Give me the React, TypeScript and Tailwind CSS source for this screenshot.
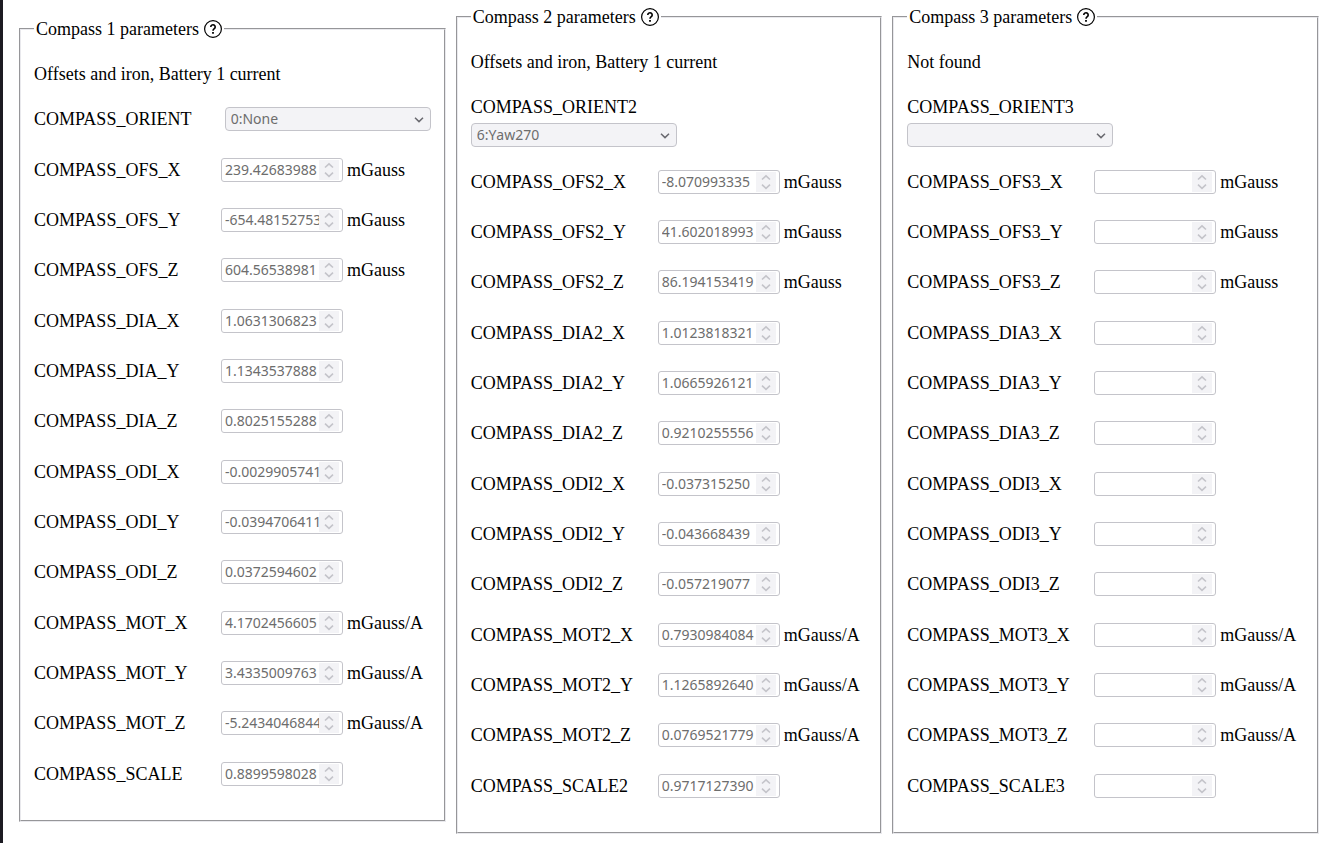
import { useId } from "react";

interface Param {
  name: string;
  value: string;
  unit?: string;
}

interface Compass {
  title: string;
  status: string;
  orient: { name: string; value: string; stacked?: boolean };
  groups: Param[][];
}

const AXES = ["X", "Y", "Z"];

const GROUPS = [
  { prefix: "OFS", unit: "mGauss" },
  { prefix: "DIA" },
  { prefix: "ODI" },
  { prefix: "MOT", unit: "mGauss/A" },
];

/** `values` holds OFS, DIA, ODI and MOT as X/Y/Z triplets, then SCALE. */
function buildGroups(suffix: string, values: string[]): Param[][] {
  const groups: Param[][] = GROUPS.map(({ prefix, unit }, g) =>
    AXES.map((axis, a) => ({
      name: `COMPASS_${prefix}${suffix}_${axis}`,
      value: values[g * 3 + a] ?? "",
      unit,
    }))
  );
  groups.push([{ name: `COMPASS_SCALE${suffix}`, value: values[12] ?? "" }]);
  return groups;
}

const COMPASSES: Compass[] = [
  {
    title: "Compass 1 parameters",
    status: "Offsets and iron, Battery 1 current",
    orient: { name: "COMPASS_ORIENT", value: "0:None" },
    groups: buildGroups("", [
      "239.42683988",
      "-654.48152753",
      "604.56538981",
      "1.0631306823",
      "1.1343537888",
      "0.8025155288",
      "-0.0029905741",
      "-0.0394706411",
      "0.0372594602",
      "4.1702456605",
      "3.4335009763",
      "-5.2434046844",
      "0.8899598028",
    ]),
  },
  {
    title: "Compass 2 parameters",
    status: "Offsets and iron, Battery 1 current",
    orient: { name: "COMPASS_ORIENT2", value: "6:Yaw270", stacked: true },
    groups: buildGroups("2", [
      "-8.070993335",
      "41.602018993",
      "86.194153419",
      "1.0123818321",
      "1.0665926121",
      "0.9210255556",
      "-0.037315250",
      "-0.043668439",
      "-0.057219077",
      "0.7930984084",
      "1.1265892640",
      "0.0769521779",
      "0.9717127390",
    ]),
  },
  {
    title: "Compass 3 parameters",
    status: "Not found",
    orient: { name: "COMPASS_ORIENT3", value: "", stacked: true },
    groups: buildGroups("3", []),
  },
];

function HelpIcon() {
  return (
    <svg width="18" height="18" viewBox="0 0 18 18" fill="none" stroke="black" aria-hidden="true">
      <circle cx="9" cy="9" r="8.4" strokeWidth="1.2" />
      <path d="M6.8 7a2.2 2.2 0 1 1 3.5 1.7c-.8.6-1.3 1-1.3 2" strokeWidth="1.6" />
      <path d="M9 12v1.8" strokeWidth="1.8" />
    </svg>
  );
}

function NumberField({ name, value, unit }: Param) {
  const id = useId();

  return (
    <div className="flex h-6 items-center">
      <label htmlFor={id} className="w-[187px] shrink-0">
        {name}
      </label>
      <div className="flex h-6 w-[122px] shrink-0 items-center rounded-[3px] border border-[#c4c4ca] bg-white px-[3px]">
        <input
          id={id}
          type="number"
          disabled
          defaultValue={value}
          className="h-5 w-0 min-w-0 flex-1 [appearance:textfield] font-['Noto_Sans',sans-serif] text-sm text-[#6d6d6d] [&::-webkit-inner-spin-button]:appearance-none"
        />
        <svg
          width="20"
          height="20"
          viewBox="0 0 20 20"
          fill="none"
          stroke="#c4c4ca"
          strokeWidth="1.6"
          className="shrink-0 bg-[#f3f3f6]"
          aria-hidden="true"
        >
          <path d="M6 7.5l4-3.7 4 3.7" />
          <path d="M6 12.7l4 3.7 4-3.7" />
        </svg>
      </div>
      {unit && <span className="ml-1">{unit}</span>}
    </div>
  );
}

function OrientField({ name, value, stacked }: Compass["orient"]) {
  const id = useId();

  return (
    <div
      className={
        stacked
          ? "mb-[23px] flex flex-col items-start gap-1"
          : "mb-[27px] flex items-center justify-between"
      }
    >
      <label htmlFor={id} className="leading-6">
        {name}
      </label>
      <div className="relative w-[206px]">
        <select
          id={id}
          disabled
          defaultValue={value}
          className="block h-6 w-full appearance-none rounded-sm border border-[#c4c4ca] bg-[#f3f3f6] px-[5px] font-['Noto_Sans',sans-serif] text-sm leading-5 text-[#6d6d6d] opacity-100 [font-kerning:none]"
        >
          <option value={value}>{value}</option>
        </select>
        <svg
          width="10"
          height="6"
          viewBox="0 0 10 6"
          fill="none"
          stroke="#6a6a70"
          strokeWidth="1.5"
          className="pointer-events-none absolute top-[10px] right-[7px]"
          aria-hidden="true"
        >
          <path d="M1 .8l4 3.8 4-3.8" />
        </svg>
      </div>
    </div>
  );
}

function CompassPanel({ title, status, orient, groups }: Compass) {
  return (
    <fieldset className="min-w-0 flex-1 border-2 border-[#e9e9ed] px-[13px] pb-[34px] [border-style:groove]">
      <legend className="flex h-5 items-center gap-[5px] px-[2px]">
        {title}
        <button type="button" aria-label={`${title} help`}>
          <HelpIcon />
        </button>
      </legend>
      <p className="mt-[25px] mb-[23px]">{status}</p>
      <OrientField {...orient} />
      <div className="flex flex-col gap-[27px]">
        {groups.map((params) => (
          <div key={params[0].name} className="flex flex-col gap-[26px]">
            {params.map((param) => (
              <NumberField key={param.name} {...param} />
            ))}
          </div>
        ))}
      </div>
    </fieldset>
  );
}

export default function App() {
  return (
    <main className="flex min-h-screen items-start border-l-[3px] border-[#1c1b22] bg-white pt-[7px] pr-3 pl-4 font-['Liberation_Serif',serif] text-lg leading-5 text-black">
      <div className="flex w-full items-center gap-[10px]">
        {COMPASSES.map((compass) => (
          <CompassPanel key={compass.title} {...compass} />
        ))}
      </div>
    </main>
  );
}
